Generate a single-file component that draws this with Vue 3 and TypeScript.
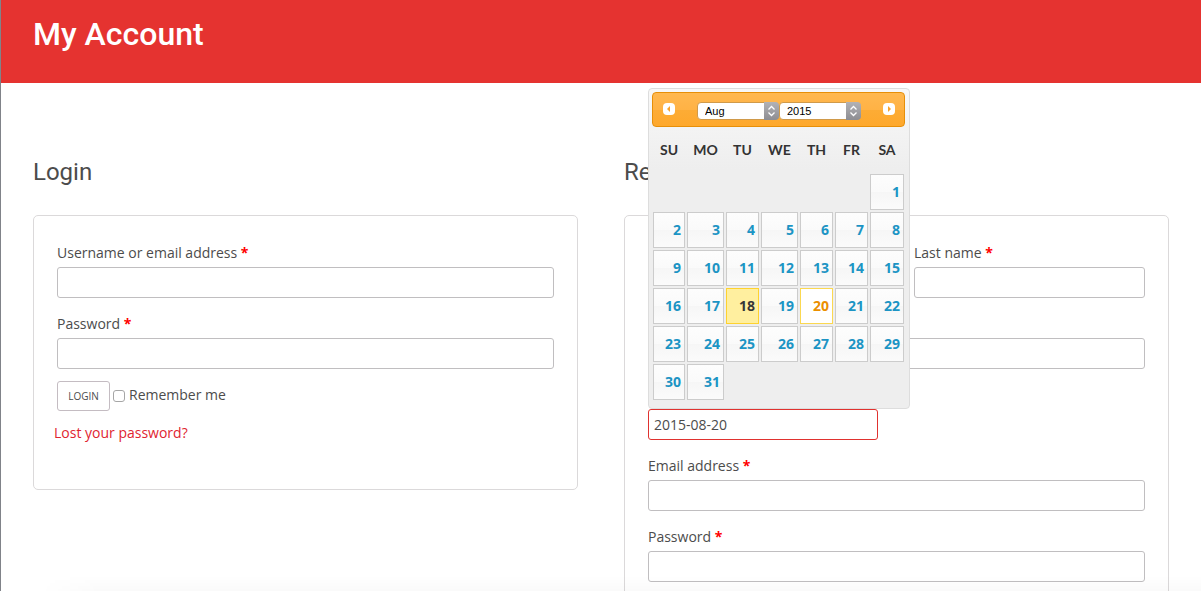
<script setup lang="ts">
import { ref } from 'vue'

const months: string[] = ['Jan', 'Feb', 'Mar', 'Apr', 'May', 'Jun', 'Jul', 'Aug', 'Sep', 'Oct', 'Nov', 'Dec']
const years: number[] = [2013, 2014, 2015, 2016, 2017]
const weekdays: string[] = ['SU', 'MO', 'TU', 'WE', 'TH', 'FR', 'SA']

const month = ref('Aug')
const year = ref(2015)
const today = 18
const selected = ref(20)
const date = ref('2015-08-20')

const weeks: (number | null)[][] = Array.from({ length: 6 }, (_, w) =>
  Array.from({ length: 7 }, (_, d) => {
    const day = w * 7 + d - 5
    return day >= 1 && day <= 31 ? day : null
  })
)

function pick(day: number): void {
  selected.value = day
  date.value = `2015-08-${String(day).padStart(2, '0')}`
}
</script>

<template>
  <div class="page">
    <header class="banner">
      <h1>My Account</h1>
    </header>

    <main class="columns">
      <section>
        <h2>Login</h2>
        <form class="panel panel-login" @submit.prevent>
          <div class="field">
            <label for="login-user">Username or email address <b>*</b></label>
            <input id="login-user" type="text" />
          </div>
          <div class="field">
            <label for="login-pass">Password <b>*</b></label>
            <input id="login-pass" type="password" />
          </div>
          <div class="actions">
            <button class="login-button" type="submit">LOGIN</button>
            <label class="remember"><input type="checkbox" />Remember me</label>
          </div>
          <a class="lost" href="#">Lost your password?</a>
        </form>
      </section>

      <section>
        <h2>Register</h2>
        <form class="panel" @submit.prevent>
          <div class="pair">
            <div class="field unlabelled">
              <input type="text" aria-label="First name" />
            </div>
            <div class="field">
              <label for="last-name">Last name <b>*</b></label>
              <input id="last-name" type="text" />
            </div>
          </div>
          <div class="field unlabelled">
            <input type="text" aria-label="Details" />
          </div>
          <div class="pair">
            <div class="field unlabelled date-field">
              <input v-model="date" class="date-input" type="text" aria-label="Date" />

              <div class="picker">
                <div class="picker-head">
                  <button class="step" type="button" aria-label="Previous month">
                    <svg width="12" height="12" viewBox="0 0 12 12">
                      <rect width="12" height="12" rx="4" fill="#fff" />
                      <path d="M7 3v6L4 6z" fill="#f9a32c" />
                    </svg>
                  </button>
                  <div class="selects">
                    <div class="select">
                      <select v-model="month" aria-label="Month">
                        <option v-for="m in months" :key="m" :value="m">{{ m }}</option>
                      </select>
                      <svg class="arrows" width="15" height="18" viewBox="0 0 15 18">
                        <path d="M4.500 7.500l3-3 3 3M4.500 10.500l3 3 3-3" fill="none" stroke="#fff" stroke-width="1.300" />
                      </svg>
                    </div>
                    <div class="select">
                      <select v-model="year" aria-label="Year">
                        <option v-for="y in years" :key="y" :value="y">{{ y }}</option>
                      </select>
                      <svg class="arrows" width="15" height="18" viewBox="0 0 15 18">
                        <path d="M4.500 7.500l3-3 3 3M4.500 10.500l3 3 3-3" fill="none" stroke="#fff" stroke-width="1.300" />
                      </svg>
                    </div>
                  </div>
                  <button class="step" type="button" aria-label="Next month">
                    <svg width="12" height="12" viewBox="0 0 12 12">
                      <rect width="12" height="12" rx="4" fill="#fff" />
                      <path d="M5 3v6l3-3z" fill="#f9a32c" />
                    </svg>
                  </button>
                </div>
                <table>
                  <colgroup>
                    <col class="w34" /><col class="w39" /><col class="w35" /><col class="w39" />
                    <col class="w35" /><col class="w35" /><col class="w36" />
                  </colgroup>
                  <thead>
                    <tr>
                      <th v-for="d in weekdays" :key="d" scope="col">{{ d }}</th>
                    </tr>
                  </thead>
                  <tbody>
                    <tr v-for="(week, w) in weeks" :key="w">
                      <td v-for="(day, i) in week" :key="i">
                        <button
                          v-if="day"
                          type="button"
                          class="day"
                          :class="{ today: day === today, selected: day === selected }"
                          @click="pick(day)"
                        >{{ day }}</button>
                      </td>
                    </tr>
                  </tbody>
                </table>
              </div>
            </div>
          </div>
          <div class="field">
            <label for="reg-email">Email address <b>*</b></label>
            <input id="reg-email" type="email" />
          </div>
          <div class="field">
            <label for="reg-pass">Password <b>*</b></label>
            <input id="reg-pass" type="password" />
          </div>
        </form>
      </section>
    </main>
    <div class="shade"></div>
  </div>
</template>

<style>
html {
  scrollbar-width: none;
  background: #fff;
}
</style>

<style scoped>
.page,
.page * {
  box-sizing: border-box;
}
.page {
  min-height: 100vh;
  border-left: 1px solid #808389;
  font-family: "Open Sans", "Noto Sans", sans-serif;
  font-size: 14px;
  color: #4c4c4c;
}
.banner {
  height: 83px;
  padding: 12px 32px;
  background: #e53330;
}
h1 {
  margin: 0;
  font: 500 32px/44px Roboto, sans-serif;
  color: #fff;
}
.columns {
  display: grid;
  grid-template-columns: 1fr 1fr;
  gap: 46px;
  padding: 72px 32px 32px;
}
h2 {
  margin: 0 0 26px;
  font: 400 24px/34px Roboto, sans-serif;
  color: #4c4c4c;
}
.panel {
  padding: 23px;
  border: 1px solid #dbd9da;
  border-radius: 5px;
}
.panel-login {
  height: 275px;
}
.field {
  margin-bottom: 12px;
}
.field > label {
  display: block;
  line-height: 28px;
}
.unlabelled {
  padding-top: 28px;
}
b {
  color: #f00;
}
.field > input {
  display: block;
  width: 100%;
  height: 31px;
  padding: 0 5px;
  border: 1px solid #c0bec0;
  border-radius: 3px;
  background: #fff;
  font: inherit;
  color: inherit;
  outline: none;
}
.field > .date-input {
  border-color: #e0322f;
}
.pair {
  display: grid;
  grid-template-columns: 230fr 231fr;
  column-gap: 36px;
}
.actions {
  display: flex;
  align-items: flex-start;
  gap: 3px;
}
.login-button {
  width: 53px;
  height: 30px;
  padding: 0;
  border: 1px solid #c4bcc2;
  border-radius: 3px;
  background: #fff;
  font: inherit;
  font-size: 10px;
  color: inherit;
}
.remember {
  display: flex;
  align-items: center;
  gap: 4px;
  line-height: 28px;
}
.remember input {
  appearance: none;
  width: 12px;
  height: 12px;
  margin: 2px 0 0;
  border: 1px solid #a6a6a6;
  border-radius: 3px;
  background: #fff;
}
.lost {
  display: inline-block;
  margin: 8px 0 0 -3px;
  line-height: 28px;
  color: #df2430;
  text-decoration: none;
}
.date-field {
  position: relative;
}
.picker {
  position: absolute;
  left: 0;
  bottom: 31px;
  width: 262px;
  padding: 3px 4px 7px 3px;
  border: 1px solid #ddd;
  border-radius: 4px;
  background: linear-gradient(#f8f8f8, #eee 80px);
}
.picker-head {
  display: flex;
  justify-content: space-between;
  align-items: flex-start;
  height: 35px;
  padding: 9px 9px 6px 10px;
  border: 1px solid #e78f08;
  border-radius: 4px;
  background: linear-gradient(#ffb850, #ffb245 50%, #fdac35 50%, #fea82c);
}
.step {
  display: flex;
  align-items: center;
  height: 14px;
  padding: 0;
  border: 0;
  background: none;
}
.selects {
  display: flex;
}
.select {
  position: relative;
  display: flex;
}
.select select {
  appearance: none;
  width: 82px;
  height: 18px;
  padding: 0 20px 0 7px;
  border: 1px solid #d09a4a;
  border-radius: 4px;
  background: #fff;
  font: 11px "Liberation Sans", sans-serif;
  color: #000;
}
.arrows {
  position: absolute;
  top: 0;
  right: 0;
  border-radius: 0 4px 4px 0;
  background: linear-gradient(#b2b2b6, #8d8d92);
  pointer-events: none;
}
table {
  width: 100%;
  table-layout: fixed;
  border-collapse: collapse;
}
.w34 { width: 34px; }
.w35 { width: 35px; }
.w36 { width: 36px; }
.w39 { width: 39px; }
th {
  height: 46px;
  padding: 0 0 2px;
  font: 700 14px Lato, sans-serif;
  color: #333;
}
td {
  height: 38px;
  padding: 1px;
}
.day {
  display: block;
  width: 100%;
  height: 36px;
  padding: 0 3px 2px;
  border: 1px solid #ccc;
  background: linear-gradient(#fdfdfd, #fafafa 50%, #f6f6f6 50%, #fbfbfb);
  font: 700 14px "Open Sans", sans-serif;
  color: #1c94c4;
  text-align: right;
}
.day.today {
  border-color: #fed22f;
  background: #ffef9f;
  color: #363636;
}
.day.selected {
  border-color: #fbd850;
  background: #fff;
  color: #eb8f00;
}
.shade {
  position: fixed;
  left: 40px;
  right: 0;
  bottom: 0;
  height: 16px;
  background: linear-gradient(transparent, rgba(0, 0, 0, 0.02));
  mask-image: linear-gradient(to right, transparent, #000 60px);
  pointer-events: none;
}
</style>
